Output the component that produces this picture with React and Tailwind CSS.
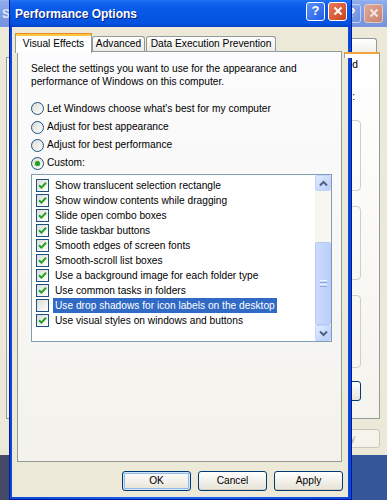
import React from "react";

const items = [
  ["Show translucent selection rectangle", true],
  ["Show window contents while dragging", true],
  ["Slide open combo boxes", true],
  ["Slide taskbar buttons", true],
  ["Smooth edges of screen fonts", true],
  ["Smooth-scroll list boxes", true],
  ["Use a background image for each folder type", true],
  ["Use common tasks in folders", true],
  ["Use drop shadows for icon labels on the desktop", false, true],
  ["Use visual styles on windows and buttons", true],
];

function Check({ checked }) {
  return (
    <span className="w-[13px] h-[13px] shrink-0 border border-[#1c5180] bg-linear-to-br from-[#dcdcd7] to-white flex items-center justify-center">
      {checked && (
        <svg width="9" height="9" viewBox="0 0 9 9">
          <path d="M1 4.2 L3.4 6.6 L8 1.8" fill="none" stroke="#21a121" strokeWidth="2" />
        </svg>
      )}
    </span>
  );
}

function Radio({ checked, label, h }) {
  return (
    <div className={`flex items-center ${h}`}>
      <span className="w-[13px] h-[13px] shrink-0 rounded-full border border-[#1c5180] bg-linear-to-br from-[#dcdcd7] to-white flex items-center justify-center">
        {checked && <span className="w-[5px] h-[5px] rounded-full bg-[#21a121] shadow-[0_0_1px_#4fc24f]" />}
      </span>
      <span className="ml-[3px]">{label}</span>
    </div>
  );
}

function ScrollBtn({ up }) {
  return (
    <div className="h-[16px] rounded-[2px] border border-[#c3d3fd] bg-linear-to-br from-[#e3ebfe] to-[#b9cdf9] flex items-center justify-center">
      <svg width="9" height="7" viewBox="0 0 9 7">
        <path d={up ? "M1 5.5 L4.5 2 L8 5.5" : "M1 1.5 L4.5 5 L8 1.5"} fill="none" stroke="#4d6185" strokeWidth="2" />
      </svg>
    </div>
  );
}

function XPButton({ children, def }) {
  return (
    <div
      className={`w-[69px] h-[20px] rounded-[3px] border border-[#003c74] bg-linear-to-b from-white to-[#e6e3d6] flex items-center justify-center text-black ${
        def ? "shadow-[inset_0_0_0_1px_#cee7ff,inset_0_0_0_2px_#98b8ea]" : "shadow-[inset_0_-1px_0_#d6d0c5]"
      }`}
    >
      {children}
    </div>
  );
}

export default function App() {
  return (
    <div className="relative w-[387px] h-[500px] overflow-hidden bg-[linear-gradient(to_right,#454b64_0px,#454b64_9px,#36569a_9px)] font-['Liberation_Sans',Arial,sans-serif] text-[10.2px] text-black">
      {/* background window */}
      <div className="absolute left-[-20px] top-[-3px] w-[410px] h-[458px] bg-[#ece9d8] flex flex-col">
        <div className="h-[30px] shrink-0 bg-[linear-gradient(to_bottom,#b6cbf5_0%,#8eabec_15%,#7d9be4_60%,#7593de_100%)] flex items-center pl-[22px] pr-[7px] pt-[2px]">
          <span className="font-bold text-[12px] text-[#dfe8fb] flex-1 pt-[2px]">S</span>
          <div className="flex gap-[3px]">
            <div className="w-[19px] h-[19px] rounded-[3px] border border-[#c4d3f5] bg-linear-to-br from-[#93afee] to-[#6b8fe0] text-white font-bold text-[13px] flex items-center justify-center">?</div>
            <div className="w-[19px] h-[19px] rounded-[3px] border border-[#e9c9c0] bg-linear-to-br from-[#e0a795] to-[#c98470] flex items-center justify-center">
              <svg width="10" height="10" viewBox="0 0 10 10"><path d="M1.5 1.5 L8.5 8.5 M8.5 1.5 L1.5 8.5" stroke="#f6e6e2" strokeWidth="2" /></svg>
            </div>
          </div>
        </div>
        <div className="flex flex-col pl-[26px] pr-[10px] pt-[11px]">
          <div className="flex justify-end">
            <div className="w-[36px] h-[14px] mr-[3px] rounded-t-[3px] border border-b-0 border-[#919b9c] bg-linear-to-b from-white to-[#f1f0ea]" />
          </div>
          <div className="flex justify-end relative z-10 -mb-px">
            <div className="w-[36px] h-[6px] border-t-[2px] border-t-[#f0a43c] border-x border-x-[#919b9c] bg-white" />
          </div>
          <div className="h-[362px] border border-[#919b9c] bg-linear-to-b from-white to-[#f4f3ee]">
            <div className="w-[351px] flex flex-col">
              <div className="text-right leading-[12px] mt-[1px]">logged</div>
              <div className="text-right leading-[12px] mt-[20px] pr-[3px]">:</div>
              <div className="ml-[300px] w-[54px] h-[71px] mt-[17px] rounded-[4px] border border-[#d0d0bf]" />
              <div className="ml-[300px] w-[54px] h-[74px] mt-[15px] rounded-[4px] border border-[#d0d0bf]" />
              <div className="ml-[300px] w-[54px] h-[73px] mt-[15px] rounded-[4px] border border-[#d0d0bf]" />
              <div className="ml-[270px] w-[84px] h-[20px] mt-[13px] rounded-[3px] border border-[#003c74] bg-linear-to-b from-white to-[#e6e3d6]" />
            </div>
          </div>
          <div className="flex justify-end mt-[10px]">
            <div className="w-[75px] h-[19px] rounded-[3px] border border-[#c9c7ba] bg-[#f5f4ea] text-[#aca899] flex items-center justify-center">Apply</div>
          </div>
        </div>
      </div>

      {/* front dialog */}
      <div className="absolute left-[9px] top-[-3px] w-[343px] h-[503px] border border-[#0019a0] bg-[linear-gradient(to_right,#0b48d8,#1a62ee_40%,#1a62ee_60%,#0b48d8)] flex flex-col">
        <div className="h-[29px] shrink-0 bg-[linear-gradient(to_bottom,#3d8cf8_0%,#1a6bf2_10%,#0a5ce8_30%,#0556e4_60%,#0452df_88%,#0340c2_100%)] flex items-center pl-[5px] pr-[4px]">
          <span className="font-bold text-[12px] text-white flex-1 pt-[3px] [text-shadow:1px_1px_0_#0a1f7d]">Performance Options</span>
          <div className="flex gap-[3px] -mt-[3px]">
            <div className="w-[19px] h-[19px] rounded-[3px] border border-white bg-linear-to-br from-[#5b8ff6] to-[#1e5ce8] text-white font-bold text-[13px] flex items-center justify-center">?</div>
            <div className="w-[19px] h-[19px] rounded-[3px] border border-white bg-linear-to-br from-[#ea7a55] to-[#c9431d] flex items-center justify-center">
              <svg width="10" height="10" viewBox="0 0 10 10"><path d="M1.5 1.5 L8.5 8.5 M8.5 1.5 L1.5 8.5" stroke="white" strokeWidth="2" /></svg>
            </div>
          </div>
        </div>
        <div className="ml-[2px] w-[336px] h-[470px] bg-[#ece9d8] flex flex-col pt-[5px]">
          {/* tabs */}
          <div className="flex items-end h-[20px] ml-[3px]">
            <div className="relative z-10 w-[77px] h-[20px] -mb-px bg-white border-x border-[#919b9c] flex flex-col">
              <div className="h-[1px] bg-[#e68b2c] -mx-px" />
              <div className="h-[2px] bg-[#ffc73c]" />
              <div className="flex-1 flex items-center justify-center pb-[2px]">Visual Effects</div>
            </div>
            <div className="w-[53px] h-[15px] mb-px rounded-t-[3px] border border-b-0 border-[#919b9c] bg-linear-to-b from-white to-[#ecebe6] flex items-center justify-center">Advanced</div>
            <div className="w-[130px] h-[15px] mb-px ml-[1px] rounded-t-[3px] border border-b-0 border-[#919b9c] bg-linear-to-b from-white to-[#ecebe6] flex items-center justify-center">Data Execution Prevention</div>
          </div>
          {/* panel */}
          <div className="-mt-px ml-[5px] w-[325px] h-[411px] border border-[#919b9c] bg-linear-to-b from-[#fcfcfe] to-[#f3f2ec] flex flex-col px-[13px] pt-[10px]">
            <div className="leading-[13px]">
              Select the settings you want to use for the appearance and
              <br />
              performance of Windows on this computer.
            </div>
            <div className="mt-[11px] flex flex-col">
              <Radio h="h-[19px]" label="Let Windows choose what's best for my computer" />
              <Radio h="h-[18px]" label="Adjust for best appearance" />
              <Radio h="h-[18px]" label="Adjust for best performance" />
              <Radio h="h-[18px]" label="Custom:" checked />
            </div>
            <div className="mt-[2px] w-[301px] h-[168px] border border-[#7f9db9] bg-white flex">
              <div className="flex-1 flex flex-col pt-[3px] pl-[4px]">
                {items.map(([label, checked, sel]) => (
                  <div key={label} className="h-[15px] flex items-center">
                    <Check checked={checked} />
                    <span
                      className={`ml-[4px] px-[2px] h-[15px] leading-[15px] ${
                        sel ? "bg-[#316ac5] text-white" : ""
                      }`}
                    >
                      {label}
                    </span>
                  </div>
                ))}
              </div>
              <div className="w-[16px] flex flex-col bg-[#f7f6f1]">
                <ScrollBtn up />
                <div className="h-[51px]" />
                <div className="flex-1 rounded-[2px] border border-[#b6c9f6] bg-linear-to-r from-[#cddafd] to-[#bccefa] flex flex-col items-center justify-center gap-[1px]">
                  <div className="w-[7px] h-[1px] bg-[#eef3fe]" />
                  <div className="w-[7px] h-[1px] bg-[#8faae9]" />
                  <div className="w-[7px] h-[1px] bg-[#eef3fe]" />
                  <div className="w-[7px] h-[1px] bg-[#8faae9]" />
                </div>
                <ScrollBtn />
              </div>
            </div>
          </div>
          {/* buttons */}
          <div className="mt-[9px] flex justify-end gap-[7px] pr-[5px]">
            <XPButton def>OK</XPButton>
            <XPButton>Cancel</XPButton>
            <XPButton>Apply</XPButton>
          </div>
        </div>
      </div>
    </div>
  );
}
